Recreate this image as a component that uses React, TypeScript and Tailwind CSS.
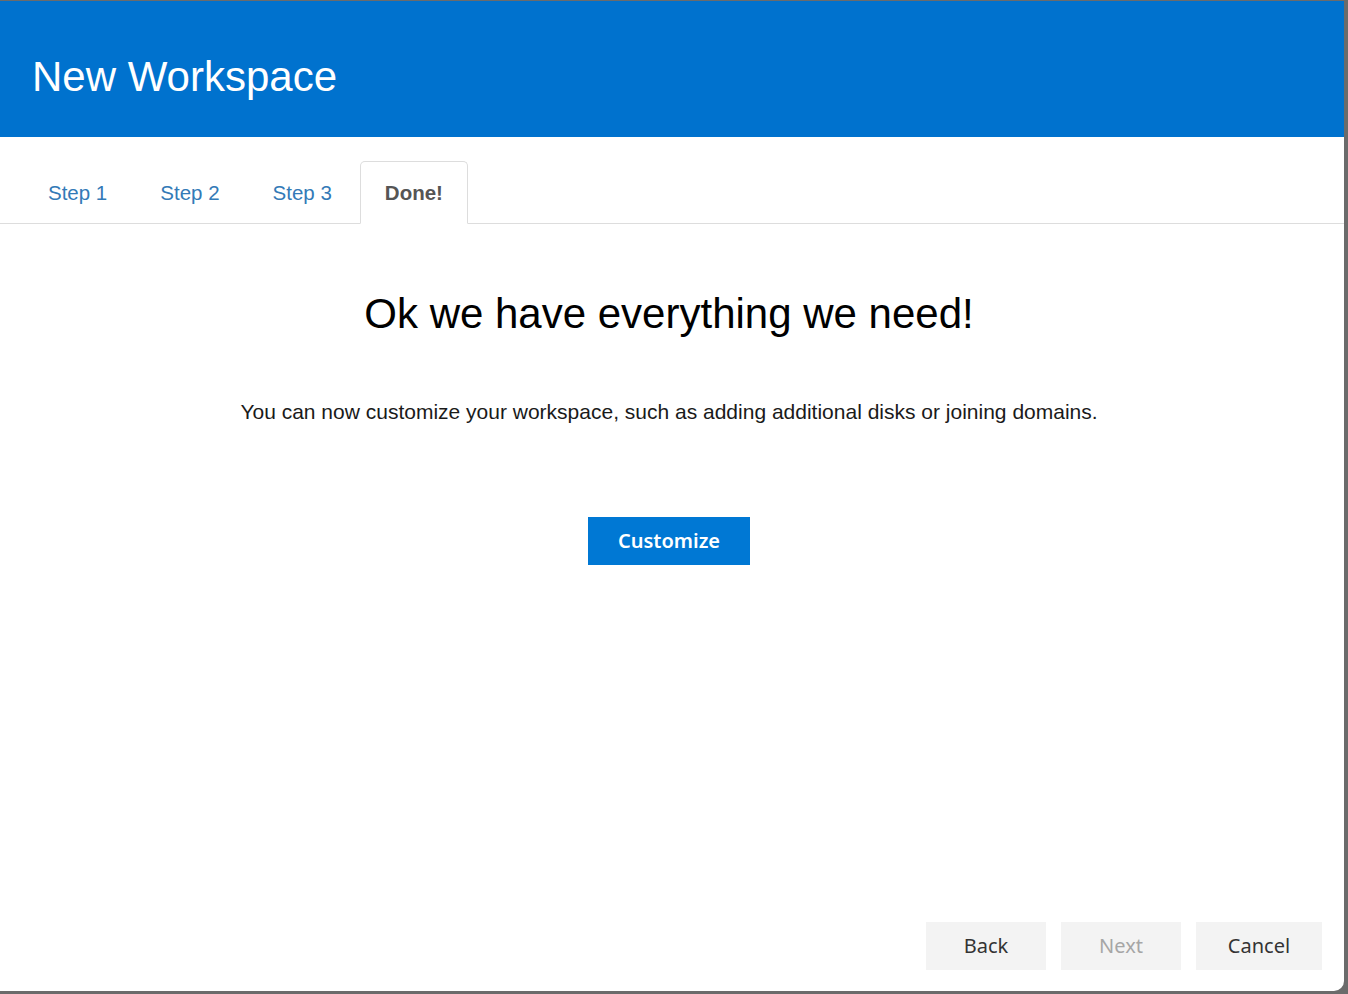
export default function App() {
  const steps = ["Step 1", "Step 2", "Step 3"];

  return (
    <div className="h-[994px] w-[1348px] overflow-hidden bg-[#6b6b6b] pt-[1px]">
      <div className="flex h-[990px] w-[1344px] flex-col overflow-hidden rounded-br-[10px] bg-white font-['Liberation_Sans',Arial,sans-serif]">
        <header className="flex h-[136px] items-center bg-[#0072ce] px-[32px] pt-[16px]">
          <h1 className="text-[42px] leading-none text-white">New Workspace</h1>
        </header>

        <nav className="flex items-end border-b border-[#dddddd] pl-[23px] pt-[24px]">
          {steps.map((step) => (
            <a
              key={step}
              href="#"
              className="mr-[3px] flex h-[62px] items-center px-[25px] pt-[2px] text-[20.5px] text-[#337ab7]"
            >
              {step}
            </a>
          ))}
          <span className="-mb-px flex h-[63px] items-center rounded-t-[5px] border border-b-white border-[#dddddd] bg-white px-[24px] pt-[2px] text-[20.5px] font-bold text-[#555555]">
            Done!
          </span>
        </nav>

        <main className="flex flex-1 flex-col items-center pr-[6px]">
          <h2 className="mt-[66px] text-[42px] leading-[48px] text-black">
            Ok we have everything we need!
          </h2>
          <p className="mt-[60px] text-[21px] leading-[28px] text-[#1a1a1a]">
            You can now customize your workspace, such as adding additional disks or joining domains.
          </p>
          <button className="mt-[91px] h-[48px] w-[162px] bg-[#0078d4] font-['Noto_Sans',sans-serif] text-[20px] font-semibold text-white">
            Customize
          </button>
        </main>

        <footer className="flex justify-end gap-[15px] pb-[21px] pr-[22px] font-['Noto_Sans',sans-serif] text-[20px]">
          <button className="h-[48px] w-[120px] bg-[#f3f3f3] text-[#333333]">Back</button>
          <button disabled className="h-[48px] w-[120px] bg-[#f3f3f3] text-[#a6a6a6]">
            Next
          </button>
          <button className="h-[48px] w-[126px] bg-[#f3f3f3] text-[#333333]">Cancel</button>
        </footer>
      </div>
    </div>
  );
}
